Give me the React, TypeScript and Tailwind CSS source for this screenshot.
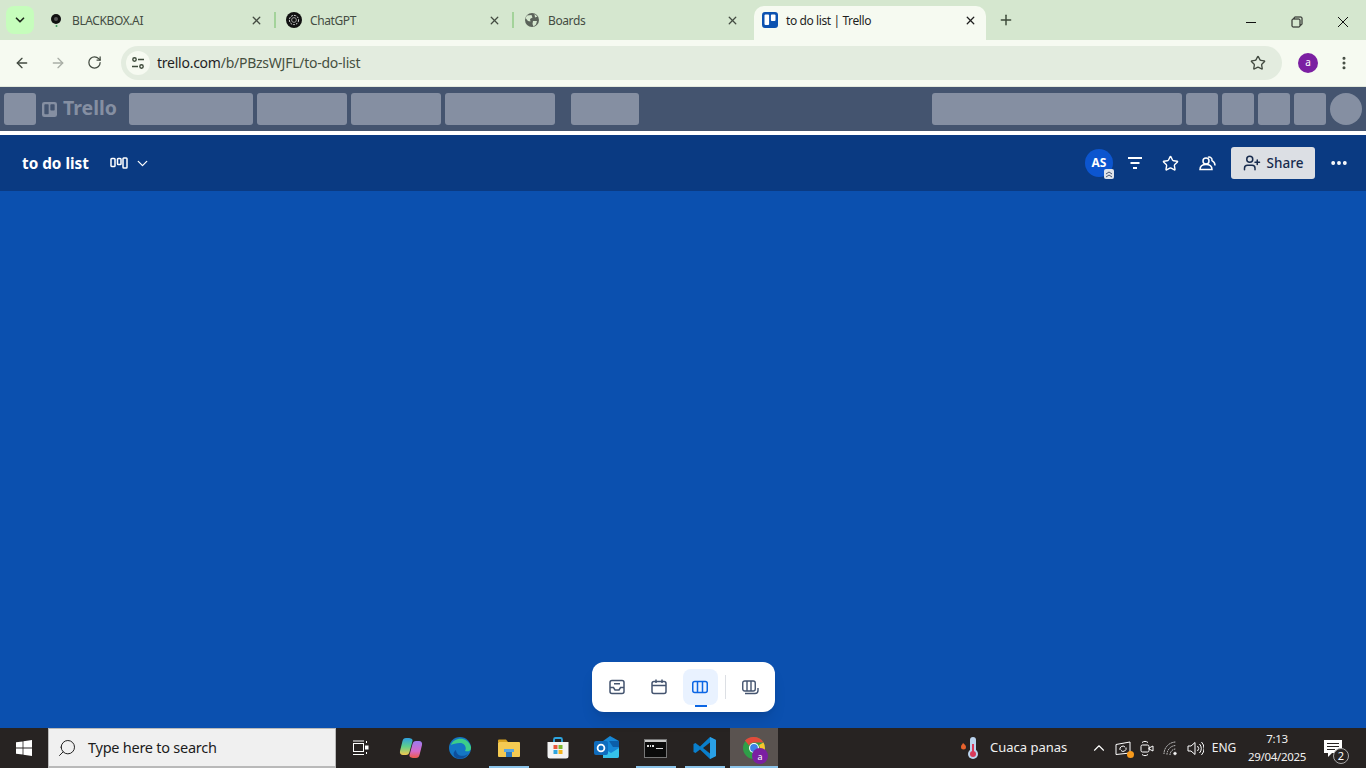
import { ArrowLeft, ArrowRight, ChevronDown, ChevronUp, Ellipsis, EllipsisVertical, Plus, RotateCw, Search, Star, UserPlus, X } from "lucide-react";

function Tab({ icon, title, active }: { icon: React.ReactNode; title: string; active?: boolean }) {
  return (
    <div className={active ? "flex h-[34px] w-[232px] items-center rounded-t-[10px] bg-[#f6faf1] pb-[6px] pl-[8px] pr-[9px] text-[#1f1f1f]" : "flex h-[34px] w-[236px] items-center pb-[6px] pl-[10px] pr-[11px] text-[#444c42]"}>
      <div className="flex w-[16px] items-center justify-center">{icon}</div>
      <span className="ml-[8px] flex-1 pt-[1px] text-[12px] tracking-[-0.4px]">{title}</span>
      <X size={13} strokeWidth={2.4} className={active ? "text-[#1f1f1f]" : "text-[#444c42]"} />
    </div>
  );
}

function TaskIcon({ children, line, active }: { children: React.ReactNode; line?: boolean; active?: boolean }) {
  return (
    <div className={active ? "relative ml-[1px] flex h-10 w-[48px] items-center justify-center bg-[#5a5350]" : "relative flex h-10 w-[49px] items-center justify-center"}>
      {children}
      {line && <div className={active ? "absolute bottom-0 left-0 h-[2px] w-[48px] bg-[#8cc4ea]" : "absolute bottom-0 left-[5px] h-[2px] w-[40px] bg-[#8cc4ea]"} />}
    </div>
  );
}

function Block({ className }: { className: string }) {
  return <div className={`h-[32px] rounded-[3px] bg-[#858fa2] ${className}`} />;
}

export default function App() {
  return (
    <div className="flex h-screen w-full flex-col overflow-hidden font-['Noto_Sans',sans-serif]">
      {/* tab strip */}
      <div className="flex h-[40px] items-end bg-[#d5e7cf]">
        <div className="mb-[6px] ml-[6px] flex h-[28px] w-[28px] items-center justify-center rounded-[8px] bg-[#c6fdbc]">
          <ChevronDown size={14} strokeWidth={3} className="text-[#1f2a1d]" />
        </div>
        <div className="ml-[4px] flex items-center">
          <Tab
            title="BLACKBOX.AI"
            icon={
              <svg width="14" height="16" viewBox="0 0 14 16">
                <circle cx="7" cy="7" r="5" fill="#111" />
                <circle cx="7" cy="7" r="2" fill="#555" />
                <circle cx="7.5" cy="14" r="1" fill="#3c9a5a" />
              </svg>
            }
          />
          <div className="mb-[6px] h-[16px] w-[2px] bg-[#a3d39a]" />
          <Tab
            title="ChatGPT"
            icon={
              <svg width="16" height="16" viewBox="0 0 16 16">
                <circle cx="8" cy="8" r="8" fill="#111" />
                <circle cx="8" cy="8" r="4.6" fill="none" stroke="#ddd" strokeWidth="1" strokeDasharray="2 1" />
                <circle cx="8" cy="8" r="2.4" fill="none" stroke="#bbb" strokeWidth="0.8" />
              </svg>
            }
          />
          <div className="mb-[6px] h-[16px] w-[2px] bg-[#a3d39a]" />
          <Tab
            title="Boards"
            icon={
              <svg width="16" height="16" viewBox="0 0 16 16">
                <circle cx="8" cy="8" r="7" fill="#5b635a" />
                <path d="M3 3.5 L7.5 3 L8.5 5.5 L6 7 L6.5 9.5 L4 9 L1.5 6 Z M9 9 L13 9 L12 12.5 L9.5 14.5 L8.5 12 Z M10.5 2 L13.5 4.5 L11 5.5 Z" fill="#d5e7cf" />
              </svg>
            }
          />
        </div>
        <div className="ml-[4px]">
          <Tab
            active
            title="to do list | Trello"
            icon={
              <svg width="16" height="16" viewBox="0 0 16 16">
                <rect width="16" height="16" rx="3" fill="#0c52b0" />
                <rect x="2.5" y="2.5" width="4.6" height="10.5" rx="1" fill="#fff" />
                <rect x="8.9" y="2.5" width="4.6" height="6.6" rx="1" fill="#fff" />
              </svg>
            }
          />
        </div>
        <div className="mb-[12px] ml-[12px]">
          <Plus size={16} strokeWidth={2.2} className="text-[#3d4a3a]" />
        </div>
        <div className="mb-[12px] ml-auto flex items-center">
          <div className="flex w-[46px] justify-center">
            <svg width="12" height="12" viewBox="0 0 12 12" stroke="#111">
              <path d="M1 6.5h10" />
            </svg>
          </div>
          <div className="flex w-[46px] justify-center">
            <svg width="12" height="12" viewBox="0 0 12 12" fill="none" stroke="#111">
              <rect x="1" y="3" width="8" height="8" rx="1" />
              <path d="M3 3V2a1 1 0 0 1 1-1h6a1 1 0 0 1 1 1v6a1 1 0 0 1-1 1H9" />
            </svg>
          </div>
          <div className="flex w-[46px] justify-center">
            <svg width="12" height="12" viewBox="0 0 12 12" stroke="#111">
              <path d="M1 1l10 10M11 1L1 11" />
            </svg>
          </div>
        </div>
      </div>

      {/* browser toolbar */}
      <div className="flex h-[47px] items-center border-b border-[#e2e8dc] bg-[#f6faf1] pb-[1px]">
        <div className="flex w-[44px] justify-center">
          <ArrowLeft size={16} strokeWidth={2} className="text-[#424a40]" />
        </div>
        <div className="flex w-[28px] justify-center">
          <ArrowRight size={16} strokeWidth={2} className="text-[#a9aea6]" />
        </div>
        <div className="flex w-[44px] justify-center">
          <RotateCw size={15} strokeWidth={2} className="text-[#424a40]" />
        </div>
        <div className="ml-[5px] flex h-[34px] w-[1161px] items-center rounded-full bg-[#e3ecdf] pl-[5px] pr-[16px]">
          <div className="flex h-[24px] w-[24px] items-center justify-center rounded-full bg-[#f6faf1]">
            <svg width="14" height="14" viewBox="0 0 14 14" fill="none" stroke="#3d4a3a" strokeWidth="1.4">
              <circle cx="3.5" cy="3.5" r="1.7" />
              <path d="M7 3.5h6M1 10.5h6" />
              <circle cx="10.5" cy="10.5" r="1.7" />
            </svg>
          </div>
          <span className="ml-[7px] flex-1 text-[14px] tracking-[-0.25px] text-[#46503f]">
            <span className="text-[#1f1f1f]">trello.com</span>/b/PBzsWJFL/to-do-list
          </span>
          <Star size={16} strokeWidth={2} className="text-[#424a40]" />
        </div>
        <div className="ml-[16px] flex h-[20px] w-[20px] items-center justify-center rounded-full bg-[#7b1fa2] text-[10px] text-white">a</div>
        <EllipsisVertical size={16} strokeWidth={2.6} className="ml-[18px] text-[#424a40]" />
      </div>

      {/* trello nav still loading */}
      <div className="flex h-[44px] shrink-0 items-center gap-[4px] bg-[#44546f] px-[4px]">
        <Block className="w-[32px]" />
        <div className="ml-[2px] flex w-[83px] items-center gap-[6px] text-[#858fa2]">
          <svg width="15" height="15" viewBox="0 0 16 16">
            <rect width="16" height="16" rx="2.5" fill="#858fa2" />
            <rect x="2.5" y="2.5" width="4.6" height="10.5" rx="0.8" fill="#44546f" />
            <rect x="8.9" y="2.5" width="4.6" height="6.6" rx="0.8" fill="#44546f" />
          </svg>
          <span className="pb-[2px] text-[19.5px] font-bold leading-none">Trello</span>
        </div>
        <Block className="w-[124px]" />
        <Block className="w-[90px]" />
        <Block className="w-[90px]" />
        <Block className="w-[110px]" />
        <Block className="ml-[12px] w-[68px]" />
        <Block className="ml-auto w-[250px]" />
        <Block className="w-[32px]" />
        <Block className="w-[32px]" />
        <Block className="w-[32px]" />
        <Block className="w-[32px]" />
        <div className="h-[32px] w-[32px] rounded-full bg-[#858fa2]" />
      </div>
      <div className="h-[4px] shrink-0 bg-white" />

      {/* board header */}
      <div className="flex h-[56px] shrink-0 items-center bg-[#0a3a82] pl-[22px] pr-[17px] text-white">
        <span className="pt-[1px] text-[15.3px] font-bold">to do list</span>
        <svg className="ml-[21px]" width="18" height="12" viewBox="0 0 18 12" fill="none" stroke="#fff" strokeWidth="1.5">
          <rect x="1" y="1.5" width="4" height="8" rx="0.8" />
          <rect x="7.5" y="1.5" width="3.5" height="6" rx="0.8" />
          <rect x="13" y="1" width="4" height="10" rx="0.8" />
        </svg>
        <ChevronDown size={17} strokeWidth={1.8} className="ml-[6px]" />
        <div className="relative ml-auto flex h-[28px] w-[28px] items-center justify-center rounded-full bg-[#0c55cf] text-[12px] font-bold">
          AS
          <div className="absolute -bottom-[2px] -right-[1px] flex h-[10px] w-[10px] items-center justify-center rounded-[2px] bg-[#dfe3ea]">
            <svg width="8" height="8" viewBox="0 0 8 8" fill="none" stroke="#44546f" strokeWidth="1">
              <path d="M1 4l3-2 3 2M1 7l3-2 3 2" />
            </svg>
          </div>
        </div>
        <svg className="ml-[14px]" width="16" height="14" viewBox="0 0 16 14" fill="none" stroke="#fff" strokeWidth="1.8">
          <path d="M1 2h14M3.5 7h9M6 12h4" />
        </svg>
        <Star size={17} strokeWidth={2} className="ml-[19px]" />
        <svg className="ml-[20px]" width="17" height="16" viewBox="0 0 17 16" fill="none" stroke="#fff" strokeWidth="1.5">
          <circle cx="7" cy="6" r="3" />
          <path d="M1 14.5c0-3 2-5 6-5s6 2 6 5z" />
          <path d="M9 2.2a3 3 0 0 1 4 3.4c2 1 3 2.8 3 5" />
        </svg>
        <div className="ml-[15px] flex h-[32px] w-[84px] items-center justify-center gap-[6px] rounded-[3px] bg-[#dcdfe4] text-[13.5px] font-medium text-[#172b4d]">
          <UserPlus size={18} strokeWidth={2} />
          Share
        </div>
        <Ellipsis size={20} strokeWidth={2.6} className="ml-[14px]" />
      </div>

      {/* board */}
      <div className="relative flex-1 bg-[#0b50af]">
        <div className="absolute bottom-[16px] left-[592px] flex h-[50px] w-[183px] items-center rounded-[12px] bg-white px-[7px] shadow-lg">
          <div className="flex w-[36px] justify-center">
            <svg width="16" height="16" viewBox="0 0 16 16" fill="none" stroke="#44546f" strokeWidth="1.5">
              <rect x="1" y="1.5" width="14" height="13" rx="2" />
              <path d="M1 8.5h3.5l1.5 2.5h4l1.5-2.5H15M5 4.8h6" />
            </svg>
          </div>
          <div className="ml-[6px] flex w-[36px] justify-center">
            <svg width="16" height="16" viewBox="0 0 16 16" fill="none" stroke="#44546f" strokeWidth="1.5">
              <rect x="1" y="2.5" width="14" height="12" rx="2" />
              <path d="M1 6.5h14M5 0.5v3.5M11 0.5v3.5" />
            </svg>
          </div>
          <div className="relative ml-[6px] flex h-[36px] w-[36px] items-center justify-center rounded-[8px] bg-[#e9f2ff]">
            <svg width="16" height="14" viewBox="0 0 16 14" fill="none" stroke="#0c66e4" strokeWidth="1.5">
              <rect x="0.75" y="1.5" width="14.5" height="11" rx="2" />
              <path d="M5.5 1.5v11M10.5 1.5v11" />
            </svg>
            <div className="absolute -bottom-[2px] left-[12px] h-[2px] w-[12px] bg-[#0c66e4]" />
          </div>
          <div className="ml-[7px] h-[24px] w-[1px] bg-[#dcdfe4]" />
          <div className="ml-[6px] flex w-[36px] justify-center">
            <svg width="17" height="15" viewBox="0 0 17 15" fill="none" stroke="#44546f" strokeWidth="1.4">
              <rect x="0.75" y="1" width="12.5" height="10" rx="2" />
              <path d="M5 1v10M9 1v10M3 13.5h10a3 3 0 0 0 3-3V8" />
            </svg>
          </div>
        </div>
      </div>

      {/* windows taskbar */}
      <div className="flex h-[40px] shrink-0 items-center bg-[#272322] text-white">
        <div className="flex w-[48px] justify-center">
          <svg width="16" height="16" viewBox="0 0 16 16" fill="#fff">
            <path d="M0 2.3l6.6-.9v6.2H0zM7.4 1.3L16 0v7.6H7.4zM0 8.4h6.6v6.2L0 13.7zM7.4 8.4H16V16l-8.6-1.3z" />
          </svg>
        </div>
        <div className="flex h-[40px] w-[288px] items-center border border-b-2 border-[#b9b9b9] bg-[#f0f0f0] pl-[8px] text-[#1c1c1c]">
          <Search size={20} strokeWidth={1.2} className="-scale-x-100 text-[#222]" />
          <span className="ml-[11px] text-[14.5px] tracking-[-0.25px]">Type here to search</span>
        </div>
        <div className="flex w-[49px] justify-center">
          <svg width="16" height="16" viewBox="0 0 16 16" fill="none" stroke="#fff" strokeWidth="1">
            <rect x="0.5" y="3.5" width="10" height="8" />
            <path d="M0 1h11M0 14.5h11M13.5 1v2M13.5 12v2" />
            <rect x="12.5" y="6" width="2.5" height="3" fill="#fff" />
          </svg>
        </div>
        <div className="ml-[1px] flex">
          <TaskIcon>
            <svg width="24" height="24" viewBox="0 0 24 24">
              <defs>
                <linearGradient id="copilotLeft" x1="0" y1="0" x2="0" y2="1">
                  <stop offset="0" stopColor="#2f9fe0" />
                  <stop offset="0.5" stopColor="#5fcf8a" />
                  <stop offset="1" stopColor="#f2c84e" />
                </linearGradient>
                <linearGradient id="copilotRight" x1="0" y1="0" x2="0" y2="1">
                  <stop offset="0" stopColor="#9a7cf0" />
                  <stop offset="0.6" stopColor="#d86ac8" />
                  <stop offset="1" stopColor="#ee5a4a" />
                </linearGradient>
              </defs>
              <path d="M9 2H7C5 2 4 3 3.5 5L1 15c-.6 2.5 1 4 3 4h3c2 0 3-1 3.5-3l3-11C14 3 12 2 9 2z" fill="url(#copilotLeft)" />
              <path d="M15 22h2c2 0 3-1 3.5-3L23 9c.6-2.5-1-4-3-4h-3c-2 0-3 1-3.5 3l-3 11C10 21 12 22 15 22z" fill="url(#copilotRight)" />
            </svg>
          </TaskIcon>
          <TaskIcon>
            <svg width="24" height="24" viewBox="0 0 24 24">
              <circle cx="12" cy="12" r="11" fill="#1476c4" />
              <path d="M3 9C5 2 19-1 23 11c.5 4-3 5-6 4 2-3 0-8-5-8-4 0-7 1-9 2z" fill="#3cce8a" />
              <path d="M8 14c0 5 6 8 12 4-3 5-10 6-13 3-2-2-2-5 1-7z" fill="#0d4f9c" />
            </svg>
          </TaskIcon>
          <TaskIcon line>
            <svg width="22" height="18" viewBox="0 0 22 18">
              <path d="M0 1.5A1 1 0 0 1 1 .5h7l2 2.5H0z" fill="#d6a11f" />
              <rect y="3" width="22" height="15" rx="1" fill="#f5ca52" />
              <path d="M6 10h10v3H6z" fill="#5aa7e0" />
              <path d="M8 13h6v5H8z" fill="#2e78bd" />
            </svg>
          </TaskIcon>
          <TaskIcon>
            <svg width="24" height="24" viewBox="0 0 24 24">
              <path d="M8 6V3.5A1.5 1.5 0 0 1 9.5 2h5A1.5 1.5 0 0 1 16 3.5V6" fill="none" stroke="#2da5e0" strokeWidth="1.8" />
              <path d="M1.5 6h21v14a2.5 2.5 0 0 1-2.5 2.5H4A2.5 2.5 0 0 1 1.5 20z" fill="#f3f3f3" />
              <rect x="7.5" y="9" width="4" height="4" fill="#e8563a" />
              <rect x="12.5" y="9" width="4" height="4" fill="#7cb82f" />
              <rect x="7.5" y="14" width="4" height="4" fill="#2da5e0" />
              <rect x="12.5" y="14" width="4" height="4" fill="#f6b51e" />
            </svg>
          </TaskIcon>
          <TaskIcon>
            <svg width="26" height="24" viewBox="0 0 26 24">
              <path d="M16 0l9 5v15a2 2 0 0 1-2 2H9V5z" fill="#1687d6" />
              <path d="M9 12l8 5 8-5v8a2 2 0 0 1-2 2H9z" fill="#35c2ea" />
              <path d="M15 5h10v6h-6z" fill="#0c5ea8" />
              <rect y="5" width="14" height="14" rx="2" fill="#0f6cbd" />
              <circle cx="7" cy="12" r="3.4" fill="none" stroke="#fff" strokeWidth="1.8" />
            </svg>
          </TaskIcon>
          <TaskIcon line>
            <svg width="23" height="19" viewBox="0 0 23 19">
              <rect x="0.5" y="0.5" width="22" height="18" fill="#0b0b0b" stroke="#777" />
              <rect x="1" y="1" width="21" height="2" fill="#c8c8c8" />
              <path d="M3 6h2v2H3zM6 6h1v2H6zM8 6h2v2H8zM12 9h7v1h-7z" fill="#ddd" />
            </svg>
          </TaskIcon>
          <TaskIcon line>
            <svg width="24" height="24" viewBox="0 0 24 24">
              <path d="M17 1l6 3v16l-6 3L7 13.5 2.5 17 .5 16V8l2-1L7 10.5z" fill="#0a7fcc" />
              <path d="M17 6.5v11L10 12z" fill="#272322" />
              <path d="M17 1l6 3v16l-6 3z" fill="#2aa0e6" />
            </svg>
          </TaskIcon>
          <TaskIcon line active>
            <svg width="24" height="24" viewBox="0 0 24 24">
              <circle cx="12" cy="12" r="11" fill="#2f9e48" />
              <path d="M12 1a11 11 0 0 1 9.5 5.5H12a5.5 5.5 0 0 0-5 3L3 4.5A11 11 0 0 1 12 1z" fill="#e24a3b" />
              <path d="M21.5 6.5A11 11 0 0 1 12 23l4.8-8.2A5.5 5.5 0 0 0 17 9z" fill="#f7c52c" />
              <circle cx="12" cy="12" r="5" fill="#fff" />
              <circle cx="12" cy="12" r="3.9" fill="#3b82e6" />
            </svg>
            <div className="absolute left-[22px] top-[20px] flex h-[16px] w-[16px] items-center justify-center rounded-full bg-[#7b1fa2] text-[9px] leading-none">a</div>
          </TaskIcon>
        </div>

        <div className="ml-auto flex items-center">
          <svg width="20" height="24" viewBox="0 0 20 24">
            <path d="M3 7c1 1 3 2 3 4a2.5 2.5 0 0 1-5 0c0-2 1-2 2-4z" fill="#e8622c" />
            <rect x="10" y="1" width="6" height="17" rx="3" fill="#bcd4ee" />
            <circle cx="13" cy="18" r="5" fill="#bcd4ee" />
            <rect x="12" y="8" width="2" height="10" fill="#d83a5a" />
            <circle cx="13" cy="18" r="3" fill="#d83a5a" />
          </svg>
          <span className="ml-[10px] w-[100px] text-[13px] text-[#f1f1f1]">Cuaca panas</span>
          <ChevronUp size={18} strokeWidth={1.5} />
          <div className="relative ml-[3px] flex w-[24px] justify-center">
            <svg width="16" height="15" viewBox="0 0 16 15" fill="none" stroke="#fff" strokeWidth="1">
              <path d="M1 3.5L15 1v11L1 13.5z" />
              <path d="M5 9a3 3 0 0 1 5-3M11 6.5a3 3 0 0 1-5 3" />
            </svg>
            <div className="absolute bottom-[-2px] right-[1px] h-[7px] w-[7px] rounded-full bg-[#f79a1c]" />
          </div>
          <div className="flex w-[24px] justify-center">
            <svg width="14" height="17" viewBox="0 0 14 17" fill="none" stroke="#fff" strokeWidth="1">
              <rect x="1" y="5" width="8" height="7" rx="1.5" />
              <path d="M9 8l4-2v5l-4-2zM2 2.5c2-1.5 4-1.5 6 0M2 14.5c2 1.5 4 1.5 6 0" />
            </svg>
          </div>
          <div className="flex w-[24px] justify-center">
            <svg width="16" height="15" viewBox="0 0 16 15" fill="none" stroke="#d8d8d8" strokeWidth="1">
              <path d="M1 13a12 12 0 0 1 12-12M4 13.5a9 9 0 0 1 9-9M7 14a6 6 0 0 1 6-6" strokeDasharray="1.5 0.8" />
              <circle cx="12" cy="12.5" r="1.3" fill="#fff" />
            </svg>
          </div>
          <div className="flex w-[24px] justify-center">
            <svg width="17" height="15" viewBox="0 0 17 15" fill="none" stroke="#fff" strokeWidth="1">
              <path d="M1 5h3l4-3.5v12L4 10H1zM10.5 5a3.5 3.5 0 0 1 0 5M12.5 3a6.5 6.5 0 0 1 0 9M14.5 1a9.500 9.500 0 0 1 0 13" />
            </svg>
          </div>
          <span className="w-[34px] text-center text-[12px] text-[#f1f1f1]">ENG</span>
          <div className="ml-[3px] flex w-[66px] flex-col items-center text-[11.5px] leading-[18px] tracking-[-0.3px] text-[#f1f1f1]">
            <span>7:13</span>
            <span>29/04/2025</span>
          </div>
          <div className="relative mr-[10px] flex w-[46px] justify-center">
            <svg width="18" height="17" viewBox="0 0 18 17" fill="#fff">
              <path d="M0 0h18v13H8l-4 4v-4H0z" />
              <path d="M3 3.5h12M3 6.5h12M3 9.5h8" stroke="#272322" strokeWidth="1" />
            </svg>
            <div className="absolute left-[23px] top-[8px] flex h-[16px] w-[16px] items-center justify-center rounded-full border border-[#aaa] bg-[#272322] text-[11px] leading-none">2</div>
          </div>
        </div>
      </div>
    </div>
  );
}
